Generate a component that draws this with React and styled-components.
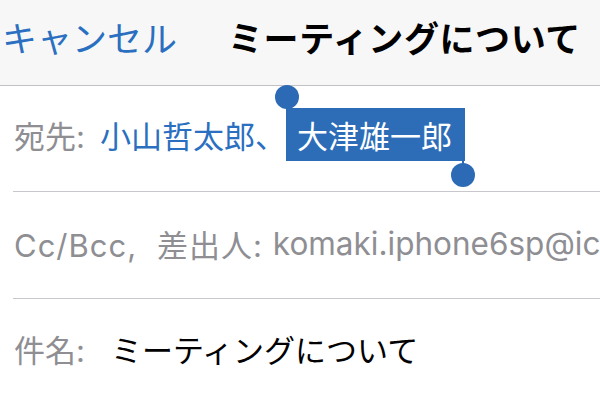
import React from 'react';
import styled, { createGlobalStyle } from 'styled-components';

const GlobalStyle = createGlobalStyle`
    html, body {
        margin: 0;
        padding: 0;
        background: #ffffff;
    }
    body {
        width: 600px;
        height: 400px;
        overflow: hidden;
        font-family: Inter, "Noto Sans CJK JP", sans-serif;
    }
`;

const Screen = styled.div`
    width: 600px;
    height: 400px;
    overflow: hidden;
    background: #ffffff;
`;

const Header = styled.div`
    height: 86px;
    background: #f7f7f7;
    border-bottom: 1px solid #c2c2c6;
    display: flex;
    align-items: center;
    gap: 51px;
    padding: 0 0 12px 2px;
    box-sizing: border-box;
    white-space: nowrap;
`;

const Cancel = styled.div`
    font-family: "Noto Sans CJK JP", sans-serif;
    font-size: 35px;
    color: #2a6fc0;
`;

const Title = styled.div`
    font-family: "Noto Sans CJK JP", sans-serif;
    font-size: 35px;
    font-weight: 700;
    color: #000000;
    letter-spacing: 0.6px;
`;

const Row = styled.div`
    height: ${p => p.$height || 106}px;
    margin-left: 13px;
    border-bottom: ${p => (p.$last ? 'none' : '1px solid #c8c7cc')};
    display: flex;
    align-items: center;
    box-sizing: border-box;
    padding: 0 0 ${p => p.$shift || 0}px 1px;
    white-space: nowrap;
    font-size: 31px;
`;

const Label = styled.span`
    color: #8e8e93;
    margin-right: ${p => p.$gap || 10}px;
    font-family: Inter, "Noto Sans CJK JP", sans-serif;
    letter-spacing: ${p => p.$spacing || 0}px;
    word-spacing: ${p => p.$words || 0}px;
`;

const Value = styled.span`
    color: ${p => p.$color || '#000000'};
    font-family: ${p => (p.$latin ? 'Inter, "Noto Sans CJK JP", sans-serif' : '"Noto Sans CJK JP", sans-serif')};
    font-size: ${p => (p.$latin ? '31.5px' : '31px')};
`;

const Selected = styled.span`
    position: relative;
    display: inline-block;
    height: 53px;
    line-height: 53px;
    padding: 0 13px 0 11px;
    background: #2d6db8;
    color: #ffffff;
    font-family: "Noto Sans CJK JP", sans-serif;
    font-size: 31px;
`;

const Handle = styled.span`
    position: absolute;
    width: 24px;
    height: 24px;
    border-radius: 50%;
    background: #2d6ab5;
    ${p => (p.$start ? 'left: -11px; top: -23px;' : 'right: -10px; bottom: -26px;')}
    &::after {
        content: '';
        position: absolute;
        left: 11px;
        width: 2px;
        height: 14px;
        background: #2d6ab5;
        ${p => (p.$start ? 'top: 20px;' : 'bottom: 20px;')}
    }
`;

export default function App() {
    return (
        <Screen>
            <GlobalStyle />
            <Header>
                <Cancel>キャンセル</Cancel>
                <Title>ミーティングについて</Title>
            </Header>
            <Row $shift={8}>
                <Label $gap={15}>宛先:</Label>
                <Value $color="#2a6fc0">小山哲太郎、</Value>
                <Selected>
                    <Handle $start />
                    大津雄一郎
                    <Handle />
                </Selected>
            </Row>
            <Row $height={107} $shift={3}>
                <Label $spacing={1} $words={10}>Cc/Bcc, 差出人:</Label>
                <Value $latin $color="#8e8e93">komaki.iphone6sp@icloud.com</Value>
            </Row>
            <Row $last $shift={8}>
                <Label $gap={26}>件名:</Label>
                <Value>ミーティングについて</Value>
            </Row>
        </Screen>
    );
}
